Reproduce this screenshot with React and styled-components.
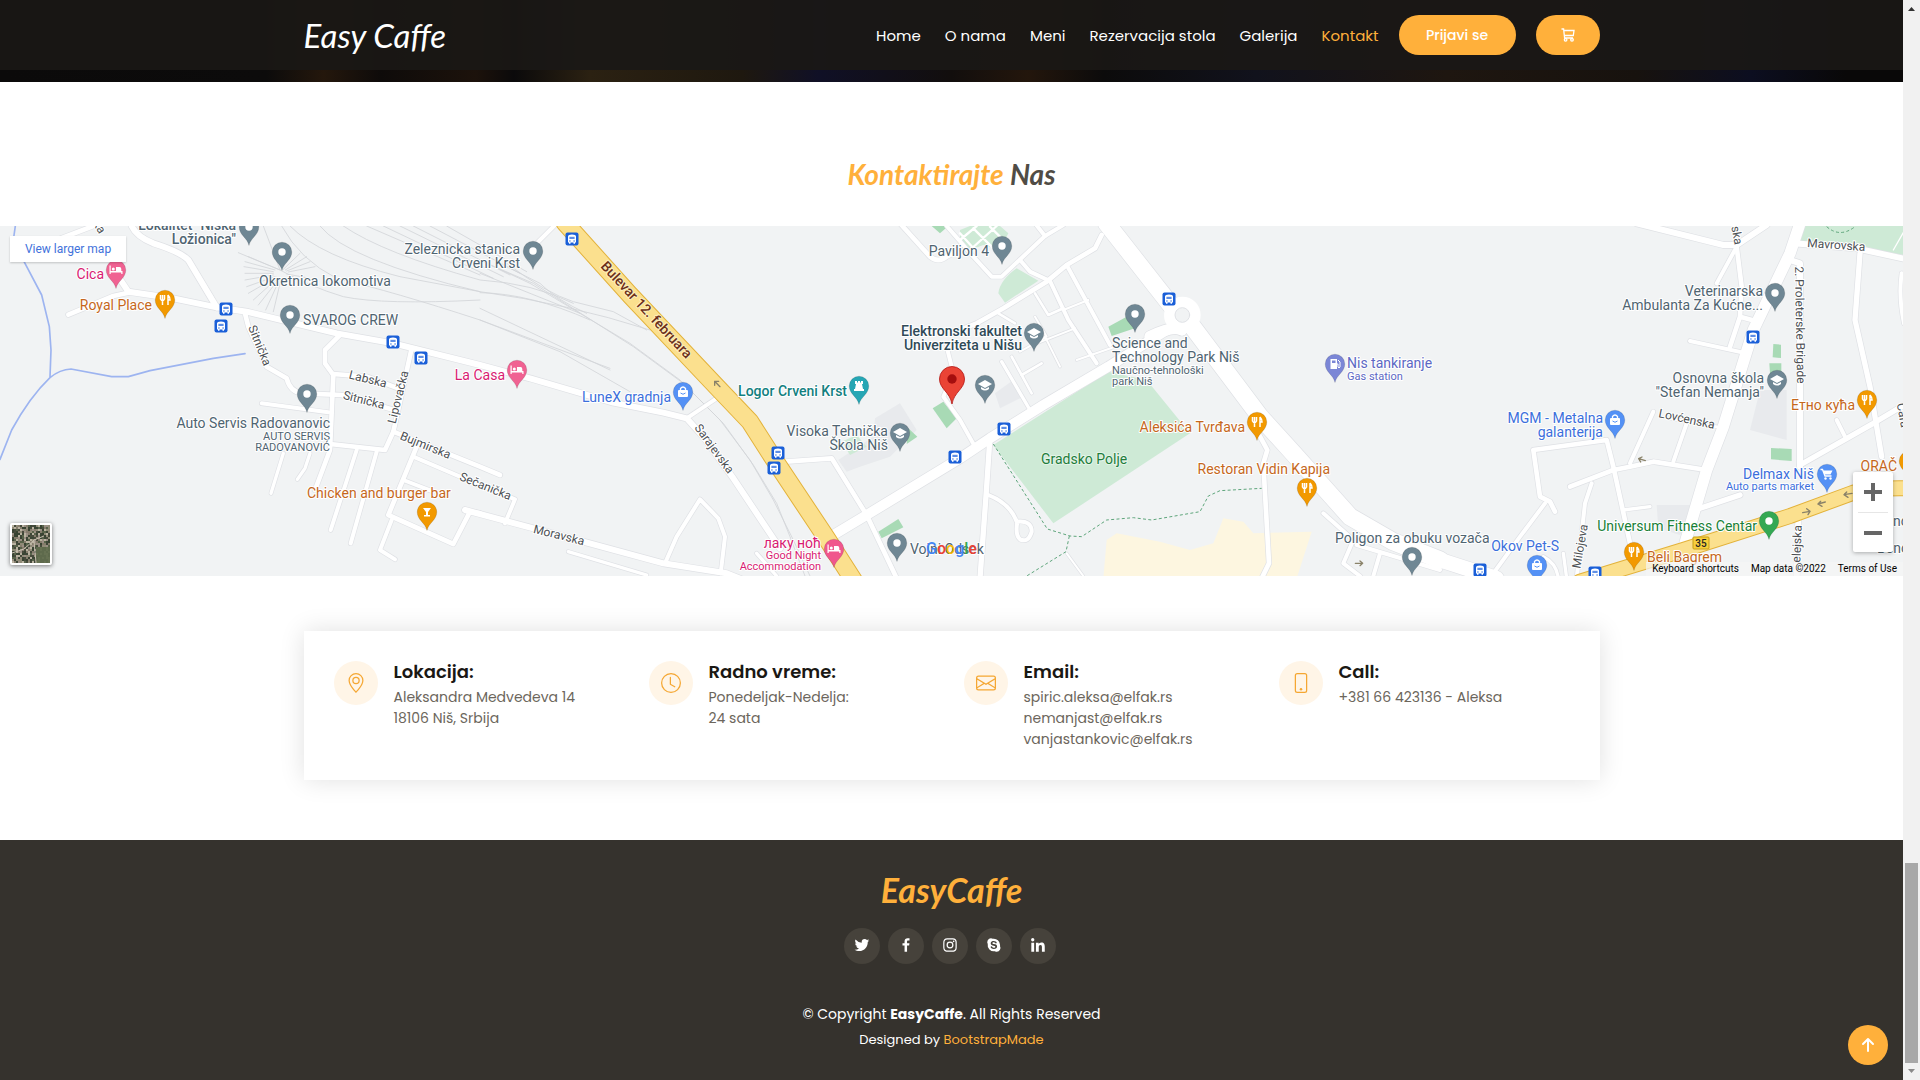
import React from "react";
import styled, { createGlobalStyle } from "styled-components";
import { BsGeoAlt, BsClock, BsEnvelope, BsPhone } from "react-icons/bs";
import {
  BiLogoTwitter,
  BiLogoFacebook,
  BiLogoInstagram,
  BiLogoSkype,
  BiLogoLinkedin,
} from "react-icons/bi";

const sans = `Poppins, Inter, "Noto Sans", sans-serif`;
const script = `Satisfy, Lato, sans-serif`;
const mapFont = `Roboto, "Noto Sans", sans-serif`;

const color = {
  accent: "#ffb03b",
  dark: "#35322d",
  ink: "#1a1814",
  soft: "#fff5e7",
  muted: "#6c665c",
};

const GlobalStyle = createGlobalStyle`
  *, *::before, *::after { box-sizing: border-box; }
  body { margin: 0; background: #fff; color: #433f39; font-family: ${sans}; }
  a { text-decoration: none; color: inherit; }
  h2, h3, h4, p, ul { margin: 0; padding: 0; }
  ul { list-style: none; }
`;

const Page = styled.div`
  display: flex;
  align-items: stretch;
  min-height: 100vh;
`;

const Content = styled.div`
  flex: 1;
  min-width: 0;
  display: flex;
  flex-direction: column;
`;

const ScrollTrack = styled.div`
  width: 17px;
  height: 100vh;
  background: #f1f1f1;
  display: flex;
  flex-direction: column;
  align-items: center;
  justify-content: flex-end;
  position: sticky;
  top: 0;
`;

const ScrollArrow = styled.svg`
  width: 17px;
  height: 17px;
  fill: ${(p) => p.$fill};
`;

const ScrollSpace = styled.div`
  flex: 846;
`;

const ScrollThumb = styled.div`
  flex: 200;
  width: 13px;
  background: #a8a8a8;
`;

const Header = styled.header`
  padding-bottom: 12px;
  background: linear-gradient(90deg, #0b0a0a 0, #0c0b0b 14%, #24170c 17%, #0e0b0a 20%, #1c120b 25%, #0b0a0b 27%, #2b2112 31%, #1e180f 39%, #101026 43%, #120e0d 50%, #23160c 54%, #0c0b0b 58%, #11121c 66%, #1e1610 76%, #17120e 86%, #0c0e20 92%, #090808 97%);
`;

const HeaderBar = styled.div`
  height: 70px;
  background: rgba(26, 24, 22, 0.92);
`;

const Container = styled.div`
  max-width: 1296px;
  margin: 0 auto;
`;

const HeaderRow = styled(Container)`
  height: 70px;
  display: flex;
  align-items: center;
`;

const Brand = styled.a`
  margin-right: auto;
  font: italic 400 33px/36px ${script};
  color: #fff;
`;

const NavList = styled.ul`
  display: flex;
  gap: 24px;
  margin-right: 20px;
`;

const NavLink = styled.a`
  font-size: 15px;
  line-height: 22px;
  font-weight: 400;
  color: ${(p) => (p.$active ? color.accent : "#fff")};
  white-space: nowrap;
`;

const PillButton = styled.button`
  height: 40px;
  width: ${(p) => p.$width}px;
  margin-left: ${(p) => p.$gap}px;
  display: flex;
  align-items: center;
  justify-content: center;
  border: 0;
  border-radius: 50px;
  background: ${color.accent};
  color: #fff;
  font: 500 14px/20px ${sans};
  cursor: pointer;
`;

const SectionTitle = styled.h2`
  padding: 72px 0 32px;
  text-align: center;
  font: italic 700 28px/40px ${script};
  color: #504c45;

  span {
    color: ${color.accent};
  }
`;

const MapFrame = styled.section`
  position: relative;
  height: 350px;
  overflow: hidden;
  background: #f1f3f4;
  font-family: ${mapFont};
`;

const MapDrawing = styled.svg`
  display: block;
  width: 100%;
  height: 350px;
  font-family: ${mapFont};
`;

const MapLabel = styled.text`
  font-size: ${(p) => p.$size || 14}px;
  font-weight: ${(p) => p.$weight || 400};
  fill: ${(p) => p.$fill};
  text-anchor: ${(p) => p.$anchor || "end"};
  paint-order: stroke;
  stroke: ${(p) => p.$halo || "#ffffff"};
  stroke-width: 2px;
  stroke-linejoin: round;
`;

const LargerMapLink = styled.a`
  position: absolute;
  left: 10px;
  top: 10px;
  width: 116px;
  height: 26px;
  background: #fff;
  box-shadow: 0 1px 2px rgba(0, 0, 0, 0.2);
  color: #4272db;
  font-size: 12px;
  line-height: 26px;
  text-align: center;
`;

const SatelliteButton = styled.button`
  position: absolute;
  left: 10px;
  bottom: 11px;
  width: 42px;
  height: 42px;
  padding: 2px;
  border: 0;
  border-radius: 2px;
  background: #fff;
  box-shadow: 0 1px 4px rgba(0, 0, 0, 0.5);

  svg {
    display: block;
    width: 38px;
    height: 38px;
  }
`;

const ZoomPanel = styled.div`
  position: absolute;
  right: 10px;
  bottom: 24px;
  width: 40px;
  padding: 0 5px;
  background: #fff;
  border-radius: 2px;
  box-shadow: 0 1px 4px rgba(0, 0, 0, 0.3);
`;

const ZoomButton = styled.button`
  display: flex;
  align-items: center;
  justify-content: center;
  width: 30px;
  height: 40px;
  padding: 0;
  border: 0;
  background: none;

  & + & {
    border-top: 1px solid #e6e6e6;
  }
`;

const GoogleMark = styled.div`
  position: absolute;
  left: 0;
  right: 0;
  bottom: 17px;
  text-align: center;
  font: 500 16px/20px ${mapFont};

  span:nth-child(1), span:nth-child(4) { color: #4285f4; }
  span:nth-child(2), span:nth-child(6) { color: #e94235; }
  span:nth-child(3) { color: #fabb05; }
  span:nth-child(5) { color: #34a853; }
`;

const MapCredits = styled.div`
  position: absolute;
  right: 0;
  bottom: 0;
  display: flex;
  gap: 12px;
  padding: 0 6px;
  background: rgba(245, 245, 245, 0.7);
  color: #000;
  font-size: 10px;
  line-height: 14px;
`;

const InfoSection = styled.section`
  padding: 55px 0 60px;
`;

const InfoCard = styled(Container)`
  display: grid;
  grid-template-columns: repeat(4, 1fr);
  gap: 24px;
  padding: 30px;
  background: #fff;
  box-shadow: 0 0 24px rgba(0, 0, 0, 0.12);
`;

const InfoItem = styled.div`
  display: flex;
  gap: 16px;
`;

const InfoIcon = styled.div`
  flex: none;
  display: flex;
  align-items: center;
  justify-content: center;
  width: 44px;
  height: 44px;
  border-radius: 50%;
  background: ${color.soft};
  color: #f5a733;
  font-size: 20px;
`;

const InfoTitle = styled.h4`
  font-size: 18px;
  line-height: 22px;
  margin-bottom: 4px;
  font-weight: 600;
  color: ${color.ink};
`;

const InfoText = styled.p`
  font-size: 14px;
  line-height: 21px;
  font-weight: 400;
  color: ${color.muted};
  white-space: nowrap;
`;

const Footer = styled.footer`
  flex: 1;
  padding: 28px 0 20px;
  background: ${color.dark};
  color: #fff;
  text-align: center;
`;

const FooterTitle = styled.h3`
  font: italic 700 34px/44px ${script};
  color: ${color.accent};
  margin-bottom: 16px;
`;

const Socials = styled.div`
  display: flex;
  justify-content: center;
  gap: 4px;
  margin-bottom: 40px;
`;

const SocialLink = styled.a`
  display: flex;
  align-items: center;
  justify-content: center;
  width: 36px;
  height: 36px;
  margin-right: 4px;
  padding-bottom: 2px;
  border-radius: 50%;
  background: #46423b;
  font-size: 18px;
`;

const Copyright = styled.p`
  font-size: 14px;
  line-height: 20px;
`;

const Credits = styled.p`
  padding-top: 6px;
  font-size: 13px;
  line-height: 20px;

  a {
    color: ${color.accent};
  }
`;

const BackToTop = styled.a`
  position: fixed;
  right: 32px;
  bottom: 15px;
  display: flex;
  align-items: center;
  justify-content: center;
  width: 40px;
  height: 40px;
  border-radius: 50%;
  background: ${color.accent};
`;

/* The map geometry is drawn in sheets of 480px, at three units to the pixel. */
const roads = [
  [0, 14, "M205 284 L340 228 L385 218"],
  [0, 18, "M345 155 L385 215 L520 235 L650 262 L740 275 L1010 340 L1180 370 L1440 435 L1590 475 L1840 548 L1990 578 L2060 595 L2110 650 L2200 775 L2340 985"],
  [0, 14, "M170 60 L280 18"],
  [0, 18, "M395 18 Q410 50 460 70 Q540 95 565 120 L650 262"],
  [0, 14, "M735 280 L745 320 L800 440 L860 475 Q870 515 905 520 L1025 525 L1190 572"],
  [0, 14, "M1020 345 L975 390 L975 430 L1000 465 L990 690 L945 810"],
  [0, 14, "M1000 462 L1100 470 L1195 505"],
  [0, 12, "M785 550 L985 577"],
  [0, 14, "M1235 385 L1180 635 L1155 690 L990 672"],
  [0, 12, "M1070 690 L992 930"],
  [0, 12, "M1130 695 L1052 970"],
  [0, 10, "M850 700 L813 820"],
  [0, 10, "M930 700 L915 745 L892 778"],
  [0, 14, "M1180 635 L1440 740 L1500 765"],
  [0, 14, "M1250 680 L1165 885 L1360 972 L1410 875 L1440 880"],
  [0, 12, "M1245 712 L1380 770 L1545 838 L1515 910"],
  [0, 12, "M1210 780 L1300 815"],
  [0, 12, "M1175 900 L1140 990 L1185 1018"],
  [0, 18, "M1395 870 L1600 925 L1750 965 L1990 1030 L2180 1060 L2230 1080"],
  [1, 10, "M265 995 L500 1065"],
  [1, 12, "M555 1030 L590 950 L660 838 L715 895 L735 950 L722 1060"],
  [1, 12, "M620 595 L710 535"],
  [1, 12, "M150 90 L225 15"],
  [1, 14, "M915 725 L1055 715 L1160 885 L1250 1075"],
  [1, 10, "M830 1000 L890 1068"],
  [1, 14, "M1260 10 L1350 110 Q1375 130 1400 110 L1430 95"],
  [1, 12, "M1400 380 L1420 460 L1390 530 L1440 600 L1485 680"],
  [1, 30, "M1060 945 L1160 885 L1440 715 L1530 655 L1690 555 L1885 440 L2060 330"],
  [2, 12, "M-40 18 L40 110 L95 170 L125 170 L255 48 L225 10"],
  [2, 12, "M255 48 L310 15"],
  [2, 14, "M425 45 L405 85 L320 135 L260 185 L130 265 L50 310 L0 330"],
  [2, 12, "M320 135 L450 375"],
  [2, 12, "M180 120 L210 155 L270 183 L325 300 L410 430"],
  [2, 10, "M125 425 L210 570"],
  [2, 8, "M155 410 L215 520"],
  [2, 8, "M185 465 L245 430"],
  [2, 8, "M225 220 L265 285 L310 265"],
  [2, 6, "M310 270 L385 240"],
  [2, 6, "M230 370 L345 325"],
  [2, 6, "M255 350 L300 440 M180 395 L260 350 L225 290"],
  [2, 8, "M115 280 L165 310"],
  [2, 6, "M350 420 L480 375"],
  [2, 16, "M90 650 L80 800 L60 1075"],
  [2, 12, "M85 825 Q150 850 170 905 Q215 900 215 935 Q205 970 180 958 Q165 945 172 905"],
  [2, 14, "M895 640 L922 690 L910 730 L927 1030 L905 1075"],
  [2, 34, "M570 350 Q640 315 665 330"],
  [2, 52, "M440 10 L640 265 M690 310 L900 590 L1000 700 L1170 890 L1300 965 L1440 1020"],
  [2, 44, "M1300 965 L1440 1020 L1610 1075"],
  [2, 12, "M1090 880 L1180 960 L1150 1030 L1200 1068"],
  [2, 12, "M1190 975 L1440 1050 M1260 1000 L1240 1068"],
  [2, 6, "M320 1000 L370 1068"],
  [3, 18, "M590 10 L850 75 L890 75 L980 15"],
  [3, 12, "M890 80 L830 190"],
  [3, 14, "M890 80 L905 200 L900 290 L870 380 M900 290 L955 305"],
  [3, 12, "M750 363 L920 400"],
  [3, 34, "M1080 10 L1050 100 L940 330 L850 620 L800 750 L735 970"],
  [3, 18, "M1050 120 L1080 130 L1080 740"],
  [3, 18, "M1060 70 L1250 85 L1400 118"],
  [3, 16, "M1260 100 L1245 300 L1290 500 L1325 710"],
  [3, 12, "M1385 160 Q1375 230 1392 310"],
  [3, 16, "M1400 550 L1300 610 L1080 735"],
  [3, 12, "M1190 600 L1215 650"],
  [3, 16, "M780 865 L900 825"],
  [3, 12, "M640 575 L570 730 M740 610 L700 725"],
  [3, 8, "M690 595 L840 622"],
  [3, 14, "M390 800 L520 750 L570 740 L640 725 L800 750"],
  [3, 14, "M570 970 L520 740 L500 660 L280 690 L300 830 L330 845 L345 875"],
  [3, 12, "M315 850 L240 950 L160 1060"],
  [3, 12, "M455 790 L435 850 L410 1075"],
  [3, 10, "M550 870 L630 860"],
  [3, 18, "M1075 900 L1070 1075"],
  [3, 10, "M370 1000 L380 1075 M310 1010 Q350 1030 355 1075"],
];

const highways = [
  [1, 50, "M255 8 L450 225 L710 500 L810 605 L880 715 L1040 955 L1120 1080"],
  [3, 42, "M420 1085 L730 990 L1050 888 L1240 818 Q1310 803 1400 805"],
];

const rails = [
  [0, "M715 98 L840 150 M745 110 L840 150 M735 125 L825 150 M732 140 L820 155 M735 160 L820 160 M735 180 L820 165 M740 200 L825 170 M745 220 L828 172 M760 240 L832 175 M775 255 L836 178 M797 270 L838 180 M820 275 L842 182 M900 100 L850 148 M920 110 L856 150 M930 125 L860 153 M945 140 L865 156 M930 175 L860 162"],
  [0, "M790 18 L840 150 Q930 200 1030 230 Q1150 255 1440 240"],
  [0, "M845 18 Q900 120 1010 175 Q1180 215 1440 300 L1830 445"],
  [0, "M870 18 Q960 110 1200 170 L1440 215"],
  [0, "M960 18 Q1040 120 1440 215 Q1700 250 1950 330"],
  [0, "M1030 18 Q1150 100 1440 180 Q1600 190 1720 250"],
  [0, "M1100 18 L1440 165 M1150 18 L1480 175 M1200 18 L1510 170 M1240 18 L1530 165 M1290 18 L1560 160 M1340 18 L1580 155"],
  [1, "M0 120 L150 190 L300 280 L450 370 L600 480 L720 600 L810 720 L880 840 L940 960 L990 1068"],
  [1, "M20 130 L160 190 L310 285 L460 380 L610 490 L730 610 L820 735 L890 850 L930 950 L975 1068"],
  [1, "M60 130 L180 190 Q230 240 320 280"],
  [1, "M80 130 Q200 220 280 245 L400 275 L500 330"],
  [1, "M0 160 L300 280 M0 218 Q150 220 330 300 M0 265 L390 450 M0 300 L240 395 L450 515"],
];

const parks = [
  [2, "#ceead6", "M100 675 L445 455 L560 480 L690 640 L280 910 Z"],
  [2, "#ceead6", "M170 145 L235 182 L135 248 L115 220 Q120 180 170 145Z"],
  [2, "#ceead6", "M30 18 L120 18 L145 40 L120 90 L70 75 L30 90 L0 60 L0 30Z"],
  [2, "#a8dab5", "M445 320 L500 290 L525 325 L455 348 Z"],
  [2, "#fdf6e0", "M430 1075 L440 960 L470 940 L600 965 L690 990 L760 970 L790 895 L850 905 L880 940 L1055 935 L1010 1075 Z"],
  [1, "#a8dab5", "M1358 565 L1390 545 L1430 595 L1400 625 Z"],
  [1, "#e8eaed", "M1185 595 L1260 550 L1310 630 L1230 710 L1140 740 L1100 755 L1075 720 L1180 650 Z"],
  [1, "#a8dab5", "M1285 625 L1312 650 L1280 672 Z"],
  [1, "#ceead6", "M1085 665 L1130 645 L1160 680 L1110 705 Z"],
  [1, "#a8dab5", "M1195 935 L1255 897 L1270 922 L1205 955 Z"],
  [1, "#a8dab5", "M1355 18 L1405 18 L1380 40 Z"],
  [2, "#e8eaed", "M105 520 L160 480 L190 530 L120 565 Z"],
  [3, "#ceead6", "M1085 18 L1390 18 L1390 105 L1250 80 L1080 62 Z"],
  [3, "#a8dab5", "M1000 372 L1023 374 L1023 414 L998 412 Z M988 430 L1024 430 L1024 460 L990 460 Z"],
  [3, "#e8eaed", "M960 510 L1040 510 L1040 660 L930 630 Z"],
  [3, "#e8eaed", "M650 855 L780 855 L720 945 L655 925 Z"],
  [3, "#a8dab5", "M993 684 L1055 687 L1055 723 L993 718 Z"],
];

const trails = [
  [2, "M100 672 L262 927 L330 948 L365 950 L440 900 L520 893 L575 900 L720 875 L745 828 L780 812 L905 805"],
  [2, "M328 948 L318 995 L200 1068"],
  [3, "M1160 20 Q1200 55 1245 20"],
];

const slate = "#6f8794";
const pins = [
  [249, 1, slate, "dot"], [282, 26, slate, "dot"], [116, 44, "#f06292", "bed"],
  [165, 74, "#f29900", "fork"], [290, 89, slate, "dot"], [307, 168, slate, "dot"],
  [427, 286, "#f29900", "glass"], [533, 25, slate, "dot"], [517, 144, "#f06292", "bed"],
  [683, 166, "#5491f5", "bag"], [859, 160, "#26a6b4", "tower"], [900, 207, slate, "cap"],
  [834, 323, "#f0578d", "bed"], [897, 317, slate, "dot"], [1002, 20, slate, "dot"],
  [1034, 107, slate, "cap"], [985, 159, slate, "cap"], [1135, 88, slate, "dot"],
  [1335, 138, "#7b86d6", "gas"], [1257, 196, "#f29900", "fork"], [1307, 262, "#f29900", "fork"],
  [1412, 331, slate, "dot"], [1775, 67, slate, "dot"], [1777, 154, slate, "cap"],
  [1615, 194, "#5491f5", "bag"], [1867, 174, "#f29900", "fork"], [1827, 248, "#5491f5", "cart"],
  [1909, 235, "#f29900", "dot"], [1769, 295, "#34a853", "dot"], [1634, 326, "#f29900", "fork"],
  [1537, 339, "#5491f5", "bag"],
];

const glyphs = {
  dot: <circle r="3.7" fill="#fff" />,
  bed: (
    <g fill="#fff">
      <path d="M-6.500-4.500H-5.300V1H5.300V-1Q5.300-3 3.500-3H0V1H6.500V4H5.300V2.500H-5.300V4H-6.500Z" />
      <circle cx="-2.700" cy="-1" r="1.500" />
    </g>
  ),
  fork: <path d="M-4.500-5v4q1 2 2 2t2-2v-4M-2.500-5V5M3-5V5M3-5q2 2 2 5H3" fill="none" stroke="#fff" strokeWidth="1.5" />,
  glass: <path d="M-4-4H4L1 0V3H3V4.500H-3V3H-1V0Z" fill="#fff" />,
  bag: (
    <g fill="none">
      <rect x="-5" y="-2" width="10" height="7" rx="1" fill="#fff" />
      <path d="M-2.500-2V-3.500Q0-6.500 2.500-3.500V-2" stroke="#fff" strokeWidth="1.300" />
      <path d="M-2.500 1Q0 3.500 2.500 1" stroke="#5491f5" strokeWidth="1" />
    </g>
  ),
  tower: <path d="M-4-5h2v1.500h1V-5h2v1.500h1V-5h2v3H3l1 5h1v2H-5V3h1l1-5h-1Z" fill="#fff" />,
  cap: <path d="M-7-1L0-5L7-1L0 3Z M-4 2V4Q0 7 4 4V2L0 4Z" fill="#fff" />,
  gas: (
    <g>
      <path d="M-4.500-5H2V5H-4.500Z" fill="#fff" />
      <path d="M-3-3.500H.5V-1H-3Z" fill="#7b86d6" />
      <path d="M3-4L5-2V3Q4 5 3 3V0H2" fill="none" stroke="#fff" strokeWidth="1" />
    </g>
  ),
  cart: (
    <g>
      <path d="M-6.500-4.500H-4.500L-2 2H4.500" fill="none" stroke="#fff" strokeWidth="1.300" />
      <path d="M-4-3.500H5.500L3.500 .5H-2.500Z" fill="#fff" />
      <circle cx="-1.500" cy="4.500" r="1.200" fill="#fff" />
      <circle cx="3.500" cy="4.500" r="1.200" fill="#fff" />
    </g>
  ),
};

const busStops = [
  [226, 83], [221, 100], [393, 116], [421, 132], [572, 13], [778, 227], [774, 242],
  [955, 231], [1004, 203], [1169, 73], [1753, 111], [1480, 344], [1595, 347],
];

const gray = "#4f6471";
const orange = "#c5671c";
const pink = "#d81b72";
const blue = "#3c6fdc";
const street = "#4c5054";

const labels = [
  { x: 236, y: 4, t: "Lokalitet \"Niška", c: gray, w: 500 },
  { x: 236, y: 18, t: "Ložionica\"", c: gray, w: 500 },
  { x: 104, y: 53, t: "Cica", c: pink },
  { x: 152, y: 84, t: "Royal Place", c: orange },
  { x: 259, y: 60, t: "Okretnica lokomotiva", c: gray, a: "start" },
  { x: 303, y: 99, t: "SVAROG CREW", c: gray, a: "start" },
  { x: 330, y: 202, t: "Auto Servis Radovanovic", c: gray },
  { x: 330, y: 214, t: "AUTO SERVIS", c: gray, s: 11 },
  { x: 330, y: 225, t: "RADOVANOVIĆ", c: gray, s: 11 },
  { x: 307, y: 272, t: "Chicken and burger bar", c: orange, a: "start" },
  { x: 520, y: 28, t: "Zeleznicka stanica", c: gray },
  { x: 520, y: 42, t: "Crveni Krst", c: gray },
  { x: 505, y: 154, t: "La Casa", c: pink },
  { x: 671, y: 176, t: "LuneX gradnja", c: blue },
  { x: 847, y: 170, t: "Logor Crveni Krst", c: "#12807f", w: 500 },
  { x: 888, y: 210, t: "Visoka Tehnička", c: gray },
  { x: 888, y: 224, t: "Škola Niš", c: gray },
  { x: 821, y: 322, t: "лаку ноћ", c: pink },
  { x: 821, y: 333, t: "Good Night", c: pink, s: 11 },
  { x: 821, y: 344, t: "Accommodation", c: pink, s: 11 },
  { x: 910, y: 328, t: "Vojni Odsek", c: gray, a: "start" },
  { x: 989, y: 30, t: "Paviljon 4", c: gray },
  { x: 1022, y: 110, t: "Elektronski fakultet", c: "#2f4a58", w: 500 },
  { x: 1022, y: 124, t: "Univerziteta u Nišu", c: "#2f4a58", w: 500 },
  { x: 1112, y: 122, t: "Science and", c: gray, a: "start" },
  { x: 1112, y: 136, t: "Technology Park Niš", c: gray, a: "start" },
  { x: 1112, y: 148, t: "Naučno-tehnološki", c: gray, a: "start", s: 11 },
  { x: 1112, y: 159, t: "park Niš", c: gray, a: "start", s: 11 },
  { x: 1041, y: 238, t: "Gradsko Polje", c: "#1e7d3c", a: "start", h: "#e4f4e8" },
  { x: 1347, y: 142, t: "Nis tankiranje", c: "#5c68c4", a: "start" },
  { x: 1347, y: 154, t: "Gas station", c: "#5c68c4", a: "start", s: 11 },
  { x: 1245, y: 206, t: "Aleksića Tvrđava", c: orange },
  { x: 1330, y: 248, t: "Restoran Vidin Kapija", c: orange },
  { x: 1335, y: 317, t: "Poligon za obuku vozača", c: gray, a: "start" },
  { x: 1763, y: 70, t: "Veterinarska", c: gray },
  { x: 1763, y: 84, t: "Ambulanta Za Kućne...", c: gray },
  { x: 1764, y: 157, t: "Osnovna škola", c: gray },
  { x: 1764, y: 171, t: "\"Stefan Nemanja\"", c: gray },
  { x: 1603, y: 197, t: "MGM - Metalna", c: blue },
  { x: 1603, y: 211, t: "galanterija", c: blue },
  { x: 1855, y: 184, t: "Етно кућа", c: orange },
  { x: 1897, y: 245, t: "ORAČ", c: orange },
  { x: 1814, y: 253, t: "Delmax Niš", c: blue },
  { x: 1814, y: 264, t: "Auto parts market", c: blue, s: 11 },
  { x: 1757, y: 305, t: "Universum Fitness Centar", c: "#188038" },
  { x: 1559, y: 325, t: "Okov Pet-S", c: blue },
  { x: 1647, y: 336, t: "Beli Bagrem", c: orange, a: "start" },
  { x: 1893, y: 300, t: "nc", c: gray, a: "start" },
  { x: 1877, y: 327, t: "Benc", c: gray, a: "start" },
];

/* Street names: centre point, angle, text. */
const streets = [
  [256, 121, 68, "Sitnička"], [367, 157, 14, "Labska"], [363, 178, 14, "Sitnička"],
  [402, 172, -76, "Lipovačka"], [424, 223, 22, "Bujmirska"], [484, 264, 22, "Sečanička"],
  [558, 313, 14, "Moravska"], [711, 225, 54, "Sarajevska"], [1686, 197, 12, "Lovćenska"],
  [1584, 321, -80, "Milojeva"], [1796, 99, 89, "2. Proleterske Brigade"],
  [1836, 23, 4, "Mavrovska"], [1801, 318, -88, "elejska"], [1733, 10, 80, "ska"], [96, 3, 60, "ka"],
  [1899, 190, 80, "Cara"],
];

function Sheet({ index, children }) {
  return <g transform={`translate(${index * 1440} -18)`}>{children}</g>;
}

function Pin({ x, y, fill, glyph }) {
  return (
    <g transform={`translate(${x} ${y})`}>
      <path d="M0 18.500C-1.500 11-9.800 8-9.800 0A9.800 9.800 0 1 1 9.800 0C9.800 8 1.500 11 0 18.500Z" fill={fill} stroke="#0003" strokeWidth=".6" />
      {glyphs[glyph]}
    </g>
  );
}

function BusStop({ x, y }) {
  return (
    <g transform={`translate(${x} ${y})`}>
      <rect x="-6.500" y="-6.500" width="13" height="13" rx="2" fill="#1a5fd8" />
      <path d="M-4 3.500V-2.500Q-4-4.500 0-4.500T4-2.500V3.500H3V4.700H1.500V3.500H-1.500V4.700H-3V3.500Z" fill="#fff" />
      <path d="M-2.600-2.200H2.600V0H-2.600Z" fill="#5f8fe6" />
      <path d="M-2.800 1.500h1.400v1h-1.400ZM1.400 1.500h1.400v1H1.400Z" fill="#1a5fd8" />
    </g>
  );
}

function StreetMap() {
  return (
    <MapDrawing viewBox="0 0 1903 350" preserveAspectRatio="xMidYMid slice" role="img" aria-label="Mapa">
      <rect width="1903" height="350" fill="#f1f3f4" />
      <g transform="scale(.333333)" fill="none" strokeLinejoin="round" strokeLinecap="round">
        {parks.map(([s, fill, d], i) => (
          <Sheet key={i} index={s}><path d={d} fill={fill} /></Sheet>
        ))}
        {rails.map(([s, d], i) => (
          <Sheet key={i} index={s}><path d={d} stroke="#d3d5d8" strokeWidth="2.500" /></Sheet>
        ))}
        <Sheet index={0}>
          <path d="M46 18 L40 60 L75 130 L125 225 L148 320 L153 390 L150 470 M0 718 L35 630 Q90 530 150 473 Q180 448 213 447 L335 470 L385 470 L450 452 L640 415 L735 401" stroke="#9db4f0" strokeWidth="5" />
        </Sheet>
        {roads.map(([s, w, d], i) => (
          <Sheet key={i} index={s}><path d={d} stroke="#dfe1e5" strokeWidth={w + 4} /></Sheet>
        ))}
        <Sheet index={2}><circle cx="667" cy="285" r="38" stroke="#fff" strokeWidth="34" /></Sheet>
        {roads.map(([s, w, d], i) => (
          <Sheet key={i} index={s}><path d={d} stroke="#fff" strokeWidth={w} /></Sheet>
        ))}
        <Sheet index={2}><circle cx="667" cy="285" r="22" fill="#f1f3f4" stroke="#dfe1e5" strokeWidth="3" /></Sheet>
        {highways.map(([s, w, d], i) => (
          <Sheet key={i} index={s}>
            <path d={d} stroke="#e3b23a" strokeWidth={w + 6} />
            <path d={d} stroke="#fbe08e" strokeWidth={w} />
          </Sheet>
        ))}
        {trails.map(([s, d], i) => (
          <Sheet key={i} index={s}><path d={d} stroke="#5da57a" strokeWidth="3" strokeDasharray="9 7" strokeLinecap="butt" /></Sheet>
        ))}
        <Sheet index={2}>
          <path d="M0 60 L50 18 M30 90 L110 18 M0 40 L45 90 M40 25 L100 85 M90 20 L140 70" stroke="#fff" strokeWidth="7" />
        </Sheet>
        <Sheet index={3}><path d="M1360 90 L1400 20" stroke="#fff" strokeWidth="4" /></Sheet>
        <g stroke="#8a8269" strokeWidth="4">
          <Sheet index={1}><path d="M720 500 L704 484 M704 496 V484 H716" /></Sheet>
          <Sheet index={3}><path d="M1236 820 L1212 824 M1220 816 L1212 824 L1224 832 M1156 846 L1134 852 M1142 844 L1134 852 L1146 859 M1088 878 L1110 874 M1100 866 L1110 874 L1104 884 M616 722 L596 716 M602 726 L596 716 L606 711" /></Sheet>
          <Sheet index={2}><path d="M1186 1030 L1208 1030 M1200 1023 L1208 1030 L1200 1037" /></Sheet>
        </g>
      </g>
      {streets.map(([x, y, angle, text], i) => (
        <g key={i} transform={`translate(${x} ${y}) rotate(${angle})`}>
          <MapLabel $fill={street} $size={12} $anchor="middle">{text}</MapLabel>
        </g>
      ))}
      <g transform="translate(643 87) rotate(47)">
        <MapLabel $fill="#6b2f1a" $size={14} $anchor="middle" $halo="#fdeeb9" $weight={500}>Bulevar 12. februara</MapLabel>
      </g>
      {busStops.map(([x, y], i) => <BusStop key={i} x={x} y={y} />)}
      {labels.map((l, i) => (
        <MapLabel key={i} x={l.x} y={l.y} $fill={l.c} $size={l.s} $weight={l.w} $anchor={l.a} $halo={l.h}>{l.t}</MapLabel>
      ))}
      {pins.map(([x, y, fill, glyph], i) => <Pin key={i} x={x} y={y} fill={fill} glyph={glyph} />)}
      <g transform="translate(952 153)">
        <path d="M0 25C-2 13-12.500 10-12.500 0A12.500 12.500 0 1 1 12.500 0C12.500 10 2 13 0 25Z" fill="#ea4335" stroke="#b31412" strokeWidth=".8" />
        <circle r="4.700" fill="#a50e0e" />
      </g>
      <rect x="1693" y="311" width="16" height="12" rx="1" fill="#f7cf3c" stroke="#c79e15" />
      <MapLabel x={1701} y={321} $fill="#222" $size={10} $anchor="middle" $weight={500} $halo="none">35</MapLabel>
    </MapDrawing>
  );
}

function SatelliteThumb() {
  const tones = ["#384332", "#8f8a76", "#58634a", "#b9b2a0", "#474b3c", "#857c6c", "#3c4636", "#9a8f84"];
  const cells = [];
  let seed = 7;
  for (let i = 0; i < 361; i += 1) {
    const cx = (i % 19) * 2;
    const cy = Math.floor(i / 19) * 2;
    const field = cx > 22 && cy > 20;
    seed = (seed * 16807) % 2147483647;
    cells.push(
      <rect key={i} x={cx} y={cy} width="2" height="2" fill={field ? (seed % 3 ? "#5e6a4c" : "#667152") : tones[(seed >> 8) % 8]} />
    );
  }
  return (
    <svg viewBox="0 0 38 38" aria-hidden="true">
      {cells}
      <path d="M0 28L12 24L22 15L32 11M22 16L24 38" stroke="#c8bfb0" fill="none" />
    </svg>
  );
}

const navItems = ["Home", "O nama", "Meni", "Rezervacija stola", "Galerija", "Kontakt"];

const info = [
  { icon: BsGeoAlt, title: "Lokacija:", lines: ["Aleksandra Medvedeva 14", "18106 Niš, Srbija"] },
  { icon: BsClock, title: "Radno vreme:", lines: ["Ponedeljak-Nedelja:", "24 sata"] },
  { icon: BsEnvelope, title: "Email:", lines: ["spiric.aleksa@elfak.rs", "nemanjast@elfak.rs", "vanjastankovic@elfak.rs"] },
  { icon: BsPhone, title: "Call:", lines: ["+381 66 423136 - Aleksa"] },
];

const socials = [
  ["Twitter", BiLogoTwitter], ["Facebook", BiLogoFacebook], ["Instagram", BiLogoInstagram],
  ["Skype", BiLogoSkype], ["LinkedIn", BiLogoLinkedin],
];

export default function App() {
  return (
    <Page>
      <GlobalStyle />
      <Content>
        <Header>
          <HeaderBar>
            <HeaderRow>
              <Brand href="#home">Easy Caffe</Brand>
              <nav>
                <NavList>
                  {navItems.map((item) => (
                    <li key={item}>
                      <NavLink href={`#${item}`} $active={item === "Kontakt"}>{item}</NavLink>
                    </li>
                  ))}
                </NavList>
              </nav>
              <PillButton type="button" $width={117} $gap={0}>Prijavi se</PillButton>
              <PillButton type="button" $width={64} $gap={20} aria-label="Korpa">
                <svg width="14" height="14" viewBox="0 0 14 14" fill="none" stroke="#fff" strokeWidth="1.3" aria-hidden="true">
                  <path d="M.5 1H2.600L3.600 10H12M2.800 2.500H13L12.300 7.500H3.400" />
                  <circle cx="4.600" cy="11.800" r="1.300" />
                  <circle cx="11" cy="11.800" r="1.300" />
                </svg>
              </PillButton>
            </HeaderRow>
          </HeaderBar>
        </Header>

        <main>
          <SectionTitle><span>Kontaktirajte</span> Nas</SectionTitle>
          <MapFrame>
            <StreetMap />
            <LargerMapLink href="#map">View larger map</LargerMapLink>
            <SatelliteButton type="button" aria-label="Satellite"><SatelliteThumb /></SatelliteButton>
            <GoogleMark>
              <span>G</span><span>o</span><span>o</span><span>g</span><span>l</span><span>e</span>
            </GoogleMark>
            <ZoomPanel>
              <ZoomButton type="button" aria-label="Zoom in">
                <svg width="18" height="18" viewBox="0 0 18 18" fill="#666"><path d="M7 0h4v7h7v4h-7v7H7v-7H0V7h7Z" /></svg>
              </ZoomButton>
              <ZoomButton type="button" aria-label="Zoom out">
                <svg width="18" height="18" viewBox="0 0 18 18" fill="#666"><path d="M0 7h18v4H0Z" /></svg>
              </ZoomButton>
            </ZoomPanel>
            <MapCredits>
              <span>Keyboard shortcuts</span>
              <span>Map data ©2022</span>
              <a href="#terms">Terms of Use</a>
            </MapCredits>
          </MapFrame>
          <InfoSection>
            <InfoCard>
              {info.map(({ icon: Icon, title, lines }) => (
                <InfoItem key={title}>
                  <InfoIcon><Icon /></InfoIcon>
                  <div>
                    <InfoTitle>{title}</InfoTitle>
                    {lines.map((line) => <InfoText key={line}>{line}</InfoText>)}
                  </div>
                </InfoItem>
              ))}
            </InfoCard>
          </InfoSection>
        </main>

        <Footer>
          <FooterTitle>EasyCaffe</FooterTitle>
          <Socials>
            {socials.map(([name, Icon]) => (
              <SocialLink key={name} href={`#${name}`} aria-label={name}><Icon /></SocialLink>
            ))}
          </Socials>
          <Copyright>© Copyright <strong>EasyCaffe</strong>. All Rights Reserved</Copyright>
          <Credits>Designed by <a href="#bootstrapmade">BootstrapMade</a></Credits>
        </Footer>
        <BackToTop href="#home" aria-label="Na vrh">
          <svg width="14" height="16" viewBox="0 0 14 16" fill="none" stroke="#fff" strokeWidth="2" strokeLinecap="round" strokeLinejoin="round">
            <path d="M7 14V2M2 7L7 2L12 7" />
          </svg>
        </BackToTop>
      </Content>
      <ScrollTrack aria-hidden="true">
        <ScrollArrow viewBox="0 0 17 17" $fill="#333"><path d="M5 11L8.500 7L12 11Z" /></ScrollArrow>
        <ScrollSpace />
        <ScrollThumb />
        <ScrollArrow viewBox="0 0 17 17" $fill="#8a8a8a"><path d="M5 6L8.500 10L12 6Z" /></ScrollArrow>
      </ScrollTrack>
    </Page>
  );
}
